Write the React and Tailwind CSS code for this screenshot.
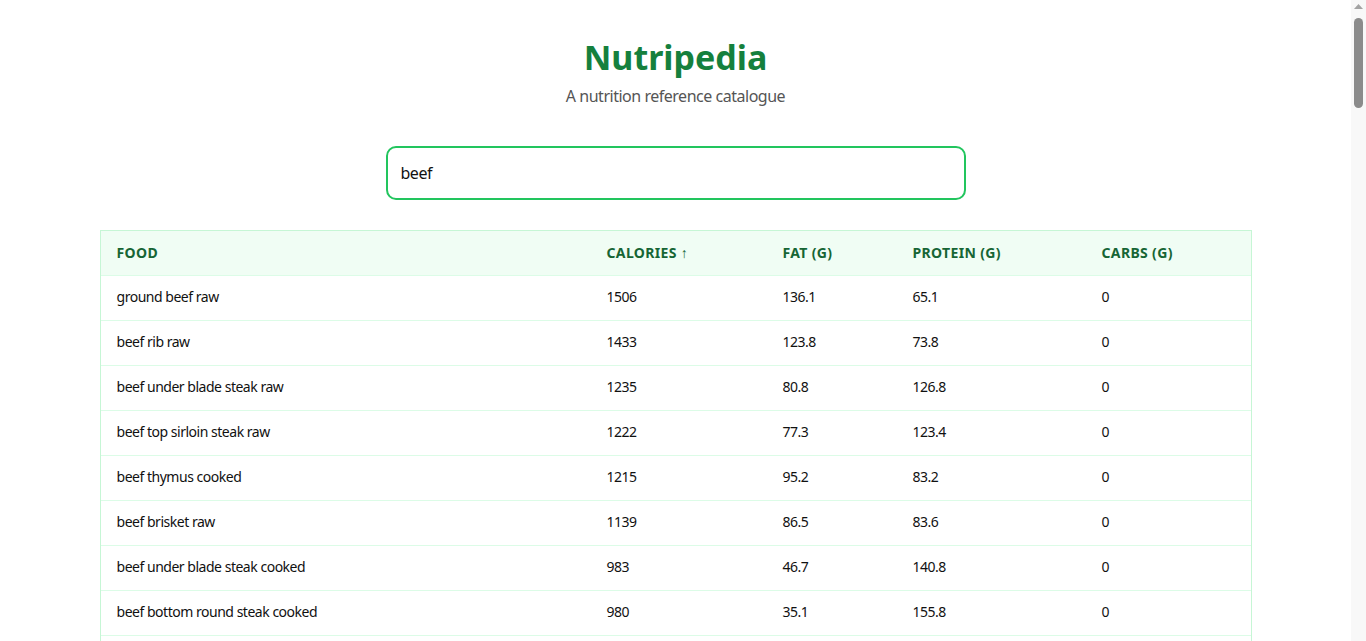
import React, { useState } from "react";

const foods = [
  { name: "ground beef raw", calories: 1506, fat: 136.1, protein: 65.1, carbs: 0 },
  { name: "beef rib raw", calories: 1433, fat: 123.8, protein: 73.8, carbs: 0 },
  { name: "beef under blade steak raw", calories: 1235, fat: 80.8, protein: 126.8, carbs: 0 },
  { name: "beef top sirloin steak raw", calories: 1222, fat: 77.3, protein: 123.4, carbs: 0 },
  { name: "beef thymus cooked", calories: 1215, fat: 95.2, protein: 83.2, carbs: 0 },
  { name: "beef brisket raw", calories: 1139, fat: 86.5, protein: 83.6, carbs: 0 },
  { name: "beef under blade steak cooked", calories: 983, fat: 46.7, protein: 140.8, carbs: 0 },
  { name: "beef bottom round steak cooked", calories: 980, fat: 35.1, protein: 155.8, carbs: 0 },
  { name: "beef chuck roast cooked", calories: 955, fat: 52.4, protein: 112.6, carbs: 0 },
  { name: "beef tenderloin raw", calories: 912, fat: 48.9, protein: 110.2, carbs: 0 },
  { name: "beef flank steak cooked", calories: 874, fat: 38.6, protein: 124.1, carbs: 0 },
  { name: "corned beef cooked", calories: 822, fat: 60.7, protein: 58.9, carbs: 1.5 },
  { name: "beef jerky", calories: 410, fat: 25.6, protein: 33.2, carbs: 11 },
  { name: "beef liver raw", calories: 306, fat: 8.3, protein: 46.1, carbs: 8.8 },
];

const cols = [
  { key: "name", label: "Food", width: "w-[490px]" },
  { key: "calories", label: "Calories ↑", width: "w-[176px]" },
  { key: "fat", label: "Fat (g)", width: "w-[130px]" },
  { key: "protein", label: "Protein (g)", width: "w-[189px]" },
  { key: "carbs", label: "Carbs (g)", width: "" },
];

// fake browser scrollbar so the page is laid out at the same width as the reference
const Scrollbar = () => (
  <div className="sticky top-0 h-screen w-[15px] shrink-0 bg-[#f8f8f8] flex flex-col items-center">
    <svg width="9" height="6" viewBox="0 0 9 6" className="mt-[4px]">
      <path d="M4.5 0 L9 5 L0 5 Z" fill="#a3a3a3" />
    </svg>
    <div className="mt-[8px] w-[9px] h-[90px] rounded-full bg-[#8b8b8b]" />
  </div>
);

export default function App() {
  const [query, setQuery] = useState("beef");
  const rows = foods.filter((f) => f.name.includes(query.toLowerCase()));

  return (
    <div className="flex items-start min-h-screen bg-white font-['Noto_Sans',sans-serif] text-[#111] tracking-[-0.03em]">
      <main className="flex-1 min-w-0">
        <div className="max-w-6xl mx-auto pt-[37px] pb-10">
          <header className="text-center">
            <h1 className="text-[34px] font-bold text-[#15803d] leading-10 tracking-normal">Nutripedia</h1>
            <p className="mt-[7px] text-base text-[#555]">A nutrition reference catalogue</p>
          </header>

          <div className="flex justify-center mt-[38px]">
            <input
              type="text"
              value={query}
              onChange={(e) => setQuery(e.target.value)}
              className="w-[580px] h-[54px] px-[13px] border-2 border-[#22c55e] rounded-[10px] text-base outline-none"
            />
          </div>

          <div className="mt-[30px] border border-[#c6f6d5]">
            <table className="w-full border-collapse text-sm">
              <thead className="bg-[#f0fdf4]">
                <tr>
                  {cols.map((c) => (
                    <th
                      key={c.key}
                      className={`${c.width} h-[44px] px-4 text-left font-bold uppercase tracking-wide text-[#166534]`}
                    >
                      {c.label}
                    </th>
                  ))}
                </tr>
              </thead>
              <tbody>
                {rows.map((r) => (
                  <tr key={r.name} className="border-t border-[#dcfce7]">
                    <td className="h-[45px] px-4 pb-[2px]">{r.name}</td>
                    <td className="px-4 pb-[2px]">{r.calories}</td>
                    <td className="px-4 pb-[2px]">{r.fat}</td>
                    <td className="px-4 pb-[2px]">{r.protein}</td>
                    <td className="px-4 pb-[2px]">{r.carbs}</td>
                  </tr>
                ))}
              </tbody>
            </table>
          </div>
        </div>
      </main>
      <Scrollbar />
    </div>
  );
}
